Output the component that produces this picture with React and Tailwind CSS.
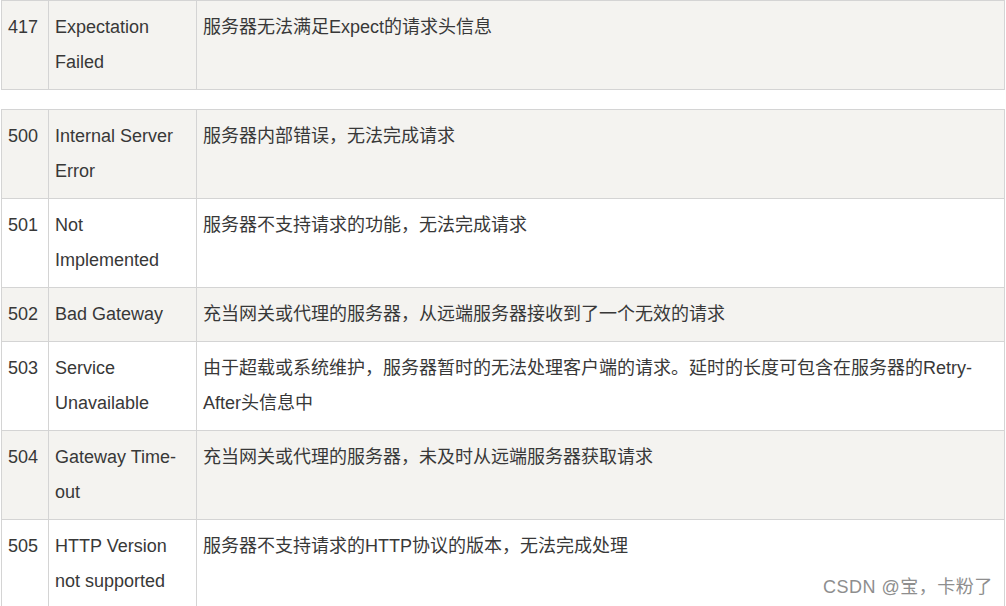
import React from 'react'

const font = { fontFamily: '"Liberation Sans", Arial, "Noto Sans CJK SC", sans-serif' }

const rows = [
  { code: '500', name: ['Internal Server', 'Error'], desc: ['服务器内部错误，无法完成请求'], stripe: true },
  { code: '501', name: ['Not', 'Implemented'], desc: ['服务器不支持请求的功能，无法完成请求'], stripe: false },
  { code: '502', name: ['Bad Gateway'], desc: ['充当网关或代理的服务器，从远端服务器接收到了一个无效的请求'], stripe: true },
  {
    code: '503',
    name: ['Service', 'Unavailable'],
    desc: ['由于超载或系统维护，服务器暂时的无法处理客户端的请求。延时的长度可包含在服务器的Retry-', 'After头信息中'],
    stripe: false,
  },
  { code: '504', name: ['Gateway Time-', 'out'], desc: ['充当网关或代理的服务器，未及时从远端服务器获取请求'], stripe: true },
  { code: '505', name: ['HTTP Version', 'not supported'], desc: ['服务器不支持请求的HTTP协议的版本，无法完成处理'], stripe: false },
]

const Lines = ({ items }) =>
  items.map((t, i) => (
    <span key={i} className="block whitespace-nowrap">
      {t}
    </span>
  ))

const Row = ({ row }) => {
  const bg = row.stripe ? 'bg-[#f4f3f0]' : 'bg-white'
  return (
    <div className={`grid grid-cols-[47px_148px_808px] ${bg}`}>
      <div className="border-r border-b border-[#d4d4d4] px-[6px] py-[9px]">{row.code}</div>
      <div className="border-r border-b border-[#d4d4d4] px-[6px] py-[9px]">
        <Lines items={row.name} />
      </div>
      <div className="border-r border-b border-[#d4d4d4] px-[6px] py-[9px]">
        <Lines items={row.desc} />
      </div>
    </div>
  )
}

const App = () => {
  return (
    <div
      className="relative w-[1006px] h-[606px] overflow-hidden bg-white text-[18px] leading-[35px] text-[#383838]"
      style={font}
    >
      <div className="ml-px w-[1004px] border-l border-t border-[#d4d4d4]">
        <Row row={{ code: '417', name: ['Expectation', 'Failed'], desc: ['服务器无法满足Expect的请求头信息'], stripe: true }} />
      </div>
      <div className="ml-px mt-[19px] w-[1004px] border-l border-t border-[#d4d4d4]">
        {rows.map((r) => (
          <Row key={r.code} row={r} />
        ))}
      </div>
      <div className="absolute left-[823px] top-[575px] text-[18px] leading-[24px] tracking-[0.5px] text-[#8e8e8e] whitespace-nowrap">
        CSDN @宝，卡粉了
      </div>
    </div>
  )
}

export default App
